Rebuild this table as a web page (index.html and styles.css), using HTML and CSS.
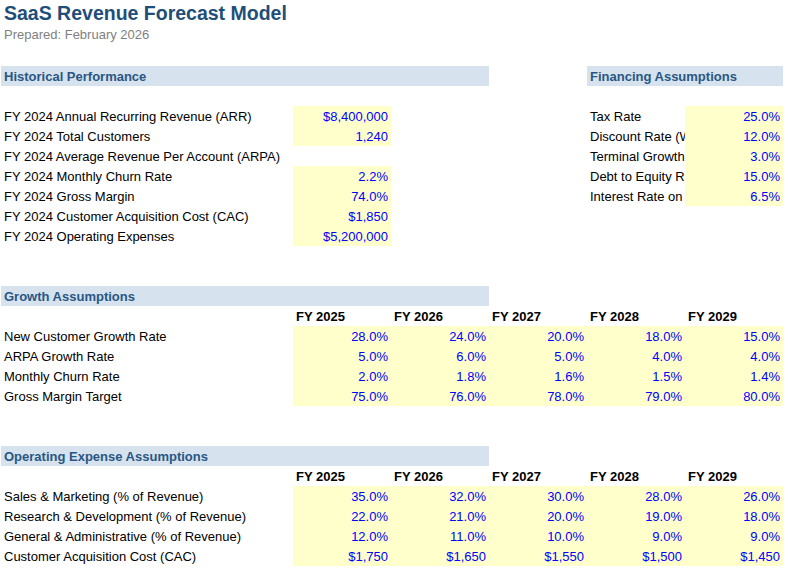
FILE: index.html
```html
<!DOCTYPE html>
<html lang="en">
<head>
<meta charset="utf-8">
<title>SaaS Revenue Forecast Model</title>
<link rel="stylesheet" href="styles.css">
</head>
<body>
<div class="sheet">
  <div class="row row-title"><div class="title">SaaS Revenue Forecast Model</div></div>
  <div class="row row-sub"><div class="subtitle">Prepared: February 2026</div></div>
  <div class="row"></div>

  <div class="row">
    <div class="section span3">Historical Performance</div>
    <div class="section c5 span2">Financing Assumptions</div>
  </div>
  <div class="row"></div>
  <div class="row">
    <div class="cell label">FY 2024 Annual Recurring Revenue (ARR)</div>
    <div class="cell input">$8,400,000</div>
    <div class="cell label c5">Tax Rate</div>
    <div class="cell input">25.0%</div>
  </div>
  <div class="row">
    <div class="cell label">FY 2024 Total Customers</div>
    <div class="cell input">1,240</div>
    <div class="cell label c5">Discount Rate (WACC)</div>
    <div class="cell input">12.0%</div>
  </div>
  <div class="row">
    <div class="cell label">FY 2024 Average Revenue Per Account (ARPA)</div>
    <div class="cell label c5">Terminal Growth Rate</div>
    <div class="cell input">3.0%</div>
  </div>
  <div class="row">
    <div class="cell label">FY 2024 Monthly Churn Rate</div>
    <div class="cell input">2.2%</div>
    <div class="cell label c5">Debt to Equity Ratio</div>
    <div class="cell input">15.0%</div>
  </div>
  <div class="row">
    <div class="cell label">FY 2024 Gross Margin</div>
    <div class="cell input">74.0%</div>
    <div class="cell label c5">Interest Rate on Debt</div>
    <div class="cell input">6.5%</div>
  </div>
  <div class="row">
    <div class="cell label">FY 2024 Customer Acquisition Cost (CAC)</div>
    <div class="cell input">$1,850</div>
  </div>
  <div class="row">
    <div class="cell label">FY 2024 Operating Expenses</div>
    <div class="cell input">$5,200,000</div>
  </div>
  <div class="row"></div>
  <div class="row"></div>

  <div class="row">
    <div class="section span3">Growth Assumptions</div>
  </div>
  <div class="row">
    <div class="cell year c2">FY 2025</div>
    <div class="cell year">FY 2026</div>
    <div class="cell year">FY 2027</div>
    <div class="cell year">FY 2028</div>
    <div class="cell year">FY 2029</div>
  </div>
  <div class="row">
    <div class="cell label">New Customer Growth Rate</div>
    <div class="cell input">28.0%</div>
    <div class="cell input">24.0%</div>
    <div class="cell input">20.0%</div>
    <div class="cell input">18.0%</div>
    <div class="cell input">15.0%</div>
  </div>
  <div class="row">
    <div class="cell label">ARPA Growth Rate</div>
    <div class="cell input">5.0%</div>
    <div class="cell input">6.0%</div>
    <div class="cell input">5.0%</div>
    <div class="cell input">4.0%</div>
    <div class="cell input">4.0%</div>
  </div>
  <div class="row">
    <div class="cell label">Monthly Churn Rate</div>
    <div class="cell input">2.0%</div>
    <div class="cell input">1.8%</div>
    <div class="cell input">1.6%</div>
    <div class="cell input">1.5%</div>
    <div class="cell input">1.4%</div>
  </div>
  <div class="row">
    <div class="cell label">Gross Margin Target</div>
    <div class="cell input">75.0%</div>
    <div class="cell input">76.0%</div>
    <div class="cell input">78.0%</div>
    <div class="cell input">79.0%</div>
    <div class="cell input">80.0%</div>
  </div>
  <div class="row"></div>
  <div class="row"></div>

  <div class="row">
    <div class="section span3">Operating Expense Assumptions</div>
  </div>
  <div class="row">
    <div class="cell year c2">FY 2025</div>
    <div class="cell year">FY 2026</div>
    <div class="cell year">FY 2027</div>
    <div class="cell year">FY 2028</div>
    <div class="cell year">FY 2029</div>
  </div>
  <div class="row">
    <div class="cell label">Sales &amp; Marketing (% of Revenue)</div>
    <div class="cell input">35.0%</div>
    <div class="cell input">32.0%</div>
    <div class="cell input">30.0%</div>
    <div class="cell input">28.0%</div>
    <div class="cell input">26.0%</div>
  </div>
  <div class="row">
    <div class="cell label">Research &amp; Development (% of Revenue)</div>
    <div class="cell input">22.0%</div>
    <div class="cell input">21.0%</div>
    <div class="cell input">20.0%</div>
    <div class="cell input">19.0%</div>
    <div class="cell input">18.0%</div>
  </div>
  <div class="row">
    <div class="cell label">General &amp; Administrative (% of Revenue)</div>
    <div class="cell input">12.0%</div>
    <div class="cell input">11.0%</div>
    <div class="cell input">10.0%</div>
    <div class="cell input">9.0%</div>
    <div class="cell input">9.0%</div>
  </div>
  <div class="row">
    <div class="cell label">Customer Acquisition Cost (CAC)</div>
    <div class="cell input">$1,750</div>
    <div class="cell input">$1,650</div>
    <div class="cell input">$1,550</div>
    <div class="cell input">$1,500</div>
    <div class="cell input">$1,450</div>
  </div>
</div>
</body>
</html>
```

FILE: styles.css
```css
html, body {
  margin: 0;
  padding: 0;
  background: #ffffff;
}

body {
  font-family: "Liberation Sans", Arial, sans-serif;
  font-size: 13px;
  color: #000000;
}

.sheet {
  padding-left: 1px;
  width: 782px;
}

.row {
  display: grid;
  grid-template-columns: 292px repeat(5, 98px);
  height: 20px;
}

.row-title {
  height: 26px;
}

.title {
  grid-column: 1 / -1;
  padding-left: 3px;
  font-size: 19.5px;
  font-weight: bold;
  line-height: 26px;
  color: #1F4E79;
  white-space: nowrap;
}

.subtitle {
  grid-column: 1 / -1;
  padding-left: 3px;
  line-height: 18px;
  color: #7F7F7F;
}

.cell {
  box-sizing: border-box;
  height: 20px;
  padding: 3px 3px 0;
  line-height: 16px;
  white-space: nowrap;
  overflow: hidden;
}

.section {
  box-sizing: border-box;
  height: 20px;
  padding: 3px 3px 0;
  line-height: 16px;
  background: #D6E3EF;
  color: #2A5683;
  font-weight: bold;
  white-space: nowrap;
}

.span3 {
  grid-column: 1 / span 3;
}

.span2 {
  grid-column-end: span 2;
}

.c2 { grid-column-start: 2; }
.c5 { grid-column-start: 5; }

.input {
  background: #FFFFCC;
  color: #0000FF;
  text-align: right;
}

.year {
  font-weight: bold;
}
```
